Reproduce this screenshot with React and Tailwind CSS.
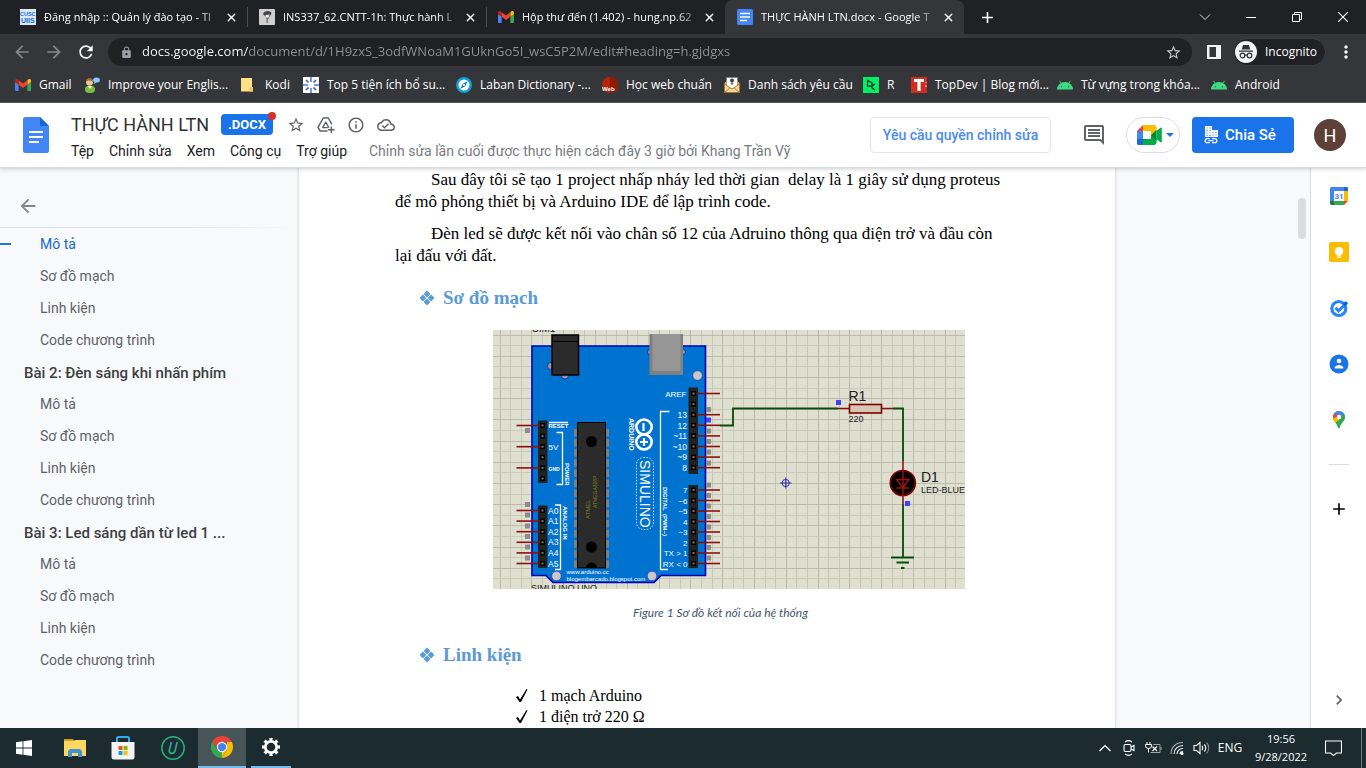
import React from "react";
import {
  MdArrowBack, MdArrowForward, MdRefresh, MdLock, MdStarBorder, MdMoreVert, MdAdd,
  MdOutlineInfo, MdOutlineCloudDone, MdOutlineComment, MdChevronRight,
} from "react-icons/md";
import { X } from "lucide-react";

/* ---------- Favicons and logos ---------- */

const GmailIcon = () => (
  <svg viewBox="0 0 24 18" className="w-4 h-3 shrink-0" aria-hidden="true">
    <path d="M1.6 18H5.5V8.6L0 4.5v11.9C0 17.3.7 18 1.6 18z" fill="#4285f4" />
    <path d="M18.5 18h3.9c.9 0 1.6-.7 1.6-1.6V4.5l-5.5 4.1z" fill="#34a853" />
    <path d="M18.5 1.7v6.9L24 4.5V2.4c0-2-2.3-3.2-3.9-2z" fill="#fbbc04" />
    <path d="M5.5 8.6V1.7L12 6.6l6.5-4.9v6.9L12 13.5z" fill="#ea4335" />
    <path d="M0 2.4v2.1l5.5 4.1V1.7L3.9.4C2.3-.8 0 .4 0 2.4z" fill="#c5221f" />
  </svg>
);

const CuscIcon = () => (
  <svg viewBox="0 0 16 16" className="w-4 h-4 shrink-0" aria-hidden="true">
    <rect width="16" height="16" fill="#dbe8f8" />
    <g fill="#1b6fd0" fontFamily="Liberation Sans, sans-serif" fontWeight="700">
      <text x="0" y="7" fontSize="5.500">CUSC</text>
      <text x="1" y="14" fontSize="7">UIIS</text>
    </g>
  </svg>
);

const BustIcon = () => (
  <svg viewBox="0 0 16 16" className="w-4 h-4 shrink-0" aria-hidden="true">
    <rect width="16" height="16" rx="1" fill="#cfcfcf" />
    <path d="M5.500 6h6L10 9.500 9 10v4H7.500v-4z" fill="#777" />
    <path d="M4 5C5 1.500 11 1 12.500 4L12 6 9 5.500 5 6.500z" fill="#444" />
    <path d="M6.800 6h3v2.500h-3z" fill="#eee" />
  </svg>
);

const DocsFavicon = () => (
  <svg viewBox="0 0 16 16" className="w-4 h-4 shrink-0" aria-hidden="true">
    <rect width="16" height="16" rx="1.500" fill="#4285f4" />
    <path d="M3 4.500h10M3 8h10M3 11.500h7" stroke="#fff" strokeWidth="1.600" />
  </svg>
);

const PersonIcon = () => (
  <svg viewBox="0 0 16 16" className="w-4 h-4 shrink-0" aria-hidden="true">
    <path d="M1 12.500C1 9.500 3 8.500 6 8.500s5 1 5 4c0 2.500-1.500 3.500-5 3.500s-5-1-5-3.500z" fill="#7cc142" />
    <path d="M4 9l2 3 2-3z" fill="#fff" />
    <circle cx="5.500" cy="5" r="3.500" fill="#f0c890" />
    <path d="M2 5C2 0 9 0 9 5 7 3 4 3 2 5z" fill="#9a6a2c" />
    <ellipse cx="12.500" cy="3" rx="3.400" ry="2.600" fill="#8cc4ff" />
    <path d="M10.500 5l-1 2.500 3-2z" fill="#8cc4ff" />
  </svg>
);

const FolderIcon = () => (
  <svg viewBox="0 0 16 16" className="w-4 h-4 shrink-0" aria-hidden="true">
    <path d="M0 1h11v9h1v4.500H0z" fill="#ffe08a" />
    <path d="M8.500 14.500V10.500H12v4z" fill="#f0c455" />
  </svg>
);

const TopFiveIcon = () => (
  <svg viewBox="0 0 16 16" className="w-4 h-4 shrink-0" aria-hidden="true">
    <rect width="16" height="16" fill="#fff" />
    <g stroke="#6b9cf0" strokeWidth="2">
      <path d="M8 0v5M8 11v5M0 8h5M11 8h5" />
      <path d="M3 3l2.500 2.500M13 3l-2.500 2.500M3 13l2.500-2.500M13 13l-2.500-2.500" stroke="#3c5fa8" strokeWidth="1.600" />
    </g>
  </svg>
);

const CompassIcon = () => (
  <svg viewBox="0 0 16 16" className="w-4 h-4 shrink-0" aria-hidden="true">
    <circle cx="8" cy="8" r="8" fill="#0e9fd4" />
    <circle cx="8" cy="8" r="5.500" fill="#fff" />
    <path d="M11.800 4L9.300 9.300 4.200 12 6.800 6.800z" fill="#0b84b8" />
    <circle cx="8" cy="8" r="1" fill="#fff" />
  </svg>
);

const WebIcon = () => (
  <svg viewBox="0 0 16 16" className="w-4 h-4 shrink-0" aria-hidden="true">
    <circle cx="8" cy="8" r="8" fill="#b52408" />
    <path d="M8 0a8 8 0 010 16z" fill="#8e1c05" />
    <text x="0" y="14" fill="#fff" fontFamily="Liberation Sans, sans-serif" fontWeight="700" fontSize="6">Web</text>
  </svg>
);

const MailListIcon = () => (
  <svg viewBox="0 0 16 16" className="w-4 h-4 shrink-0" aria-hidden="true">
    <path d="M.5 6L3 4h10l2.500 2v9.500H.5z" fill="#e9b355" />
    <path d="M2.500 .5h11v9L8 12 2.500 9.500z" fill="#fff" stroke="#777" strokeWidth=".6" />
    <circle cx="8" cy="3.500" r="2" fill="#444" />
    <circle cx="8" cy="6.500" r="1.300" fill="#d14a3a" />
    <path d="M.5 7l7.500 5 7.500-5v8.500H.5z" fill="#f6d79a" stroke="#a06a1c" strokeWidth=".8" />
    <path d="M.5 15.500L6 10.800M15.500 15.500L10 10.800" stroke="#a06a1c" strokeWidth=".8" />
  </svg>
);

const DataIcon = () => (
  <svg viewBox="0 0 16 16" className="w-4 h-4 shrink-0" aria-hidden="true">
    <rect width="16" height="16" fill="#03ef62" />
    <path d="M4.500 9.500V3.500L9 5.800v3L12 7M4.500 9.500L9 8.800M9 8.800V11l3 2" fill="none" stroke="#05192d" strokeWidth="1.100" />
  </svg>
);

const TopDevIcon = () => (
  <svg viewBox="0 0 16 16" className="w-4 h-4 shrink-0" aria-hidden="true">
    <rect width="16" height="16" fill="#d02c20" />
    <path d="M3 2h10v3H9.600v9H6.400V5H3z" fill="#fff" />
    <path d="M15 5v1M15 8v2" stroke="#fff" strokeWidth=".8" />
  </svg>
);

const AndroidIcon = () => (
  <svg viewBox="0 0 16 16" className="w-4 h-4 shrink-0" aria-hidden="true">
    <path d="M0 12.500a8 7.500 0 0116 0z" fill="#3ddc84" />
    <path d="M2.500 3.800l2 3M13.500 3.800l-2 3" stroke="#3ddc84" strokeWidth=".9" />
    <circle cx="4.500" cy="9.800" r=".7" fill="#1f6b42" />
    <circle cx="11.500" cy="9.800" r=".7" fill="#1f6b42" />
  </svg>
);

const ChromeLogo = () => (
  <svg viewBox="0 0 24 24" className="w-[22px] h-[22px]" aria-hidden="true">
    <path d="M12 6.500h10.600L22.400 6A12 12 0 001.600 6L6.800 14z" fill="#ea4335" />
    <path d="M1.600 6l5.200 9 5.200 2.500L12 24A12 12 0 011.600 6z" fill="#34a853" />
    <path d="M12 24l5.200-9 0-8.500h5.500A12 12 0 0112 24z" fill="#fbbc04" />
    <path d="M12 24l5-9-5 2z" fill="#fbbc04" />
    <circle cx="12" cy="12" r="5.600" fill="#fff" />
    <circle cx="12" cy="12" r="4.500" fill="#4285f4" />
  </svg>
);

/* ---------- Browser chrome ---------- */

const tabs = [
  { title: "Đăng nhập :: Quản lý đào tạo - Tl", icon: <CuscIcon /> },
  { title: "INS337_62.CNTT-1h: Thực hành L", icon: <BustIcon /> },
  { title: "Hộp thư đến (1.402) - hung.np.62", icon: <GmailIcon /> },
  { title: "THỰC HÀNH LTN.docx - Google T", icon: <DocsFavicon />, active: true },
];

const bookmarks = [
  { label: "Gmail", icon: <GmailIcon />, width: "w-[69px]" },
  { label: "Improve your Englis...", icon: <PersonIcon />, width: "w-[157px]" },
  { label: "Kodi", icon: <FolderIcon />, width: "w-[62px]" },
  { label: "Top 5 tiện ích bổ su...", icon: <TopFiveIcon />, width: "w-[153px]" },
  { label: "Laban Dictionary -...", icon: <CompassIcon />, width: "w-[146px]" },
  { label: "Học web chuẩn", icon: <WebIcon />, width: "w-[122px]" },
  { label: "Danh sách yêu cầu", icon: <MailListIcon />, width: "w-[139px]" },
  { label: "R", icon: <DataIcon />, width: "w-[48px]" },
  { label: "TopDev | Blog mới...", icon: <TopDevIcon />, width: "w-[146px]" },
  { label: "Từ vựng trong khóa...", icon: <AndroidIcon />, width: "w-[154px]" },
  { label: "Android", icon: <AndroidIcon />, width: "w-[80px]" },
];

function Tab({ title, icon, active }) {
  return (
    <div
      className={
        "flex h-[34px] w-[239px] shrink-0 items-center gap-2 pl-3 pr-2 " +
        (active ? "rounded-t-lg bg-[#35363a]" : "")
      }
    >
      {icon}
      <button
        role="tab"
        aria-selected={!!active}
        className="w-[176px] whitespace-nowrap text-left text-[11px] [mask-image:linear-gradient(90deg,#000_155px,transparent_180px)]"
      >
        {title}
      </button>
      <button aria-label="Đóng thẻ" className="flex h-4 w-4 shrink-0 items-center justify-center">
        <X size={13} strokeWidth={2.500} />
      </button>
    </div>
  );
}

const Separator = () => <div className="-mr-px h-5 w-px shrink-0 bg-[#4a4c50]" />;

function TabStrip() {
  return (
    <div className="flex h-[34px] items-center bg-[#202124] pl-2 text-white">
      <div role="tablist" className="flex items-center">
        <Tab {...tabs[0]} />
        <Separator />
        <Tab {...tabs[1]} />
        <Separator />
        <Tab {...tabs[2]} />
        <Tab {...tabs[3]} />
      </div>
      <button aria-label="Thẻ mới" className="ml-[11px] flex h-6 w-6 items-center justify-center">
        <MdAdd size={19} />
      </button>
      <div className="ml-auto flex h-7 items-center">
        <button aria-label="Tìm thẻ" className="flex w-[46px] justify-center">
          <svg width="12" height="12" viewBox="0 0 12 12"><path d="M1 3.500l5 5 5-5" fill="none" stroke="#ddd" strokeWidth="1" /></svg>
        </button>
        <button aria-label="Thu nhỏ" className="flex w-[46px] justify-center">
          <svg width="10" height="10" viewBox="0 0 10 10"><path d="M0 5.500h10" stroke="#fff" /></svg>
        </button>
        <button aria-label="Khôi phục" className="flex w-[46px] justify-center">
          <svg width="10" height="10" viewBox="0 0 10 10" fill="none" stroke="#fff"><path d="M.5 2.500h7v7h-7zM2.500 2.500v-2h7v7h-2" /></svg>
        </button>
        <button aria-label="Đóng" className="flex w-[46px] justify-center">
          <svg width="10" height="10" viewBox="0 0 10 10"><path d="M0 0l10 10M10 0L0 10" stroke="#fff" strokeWidth="1.100" /></svg>
        </button>
      </div>
    </div>
  );
}

function Toolbar() {
  return (
    <div className="flex h-9 items-center bg-[#35363a] text-white">
      <div className="flex w-[108px] shrink-0 items-center gap-3 pl-3">
        <button aria-label="Quay lại" className="text-[#85878a]"><MdArrowBack size={20} /></button>
        <button aria-label="Tiến" className="text-[#85878a]"><MdArrowForward size={20} /></button>
        <button aria-label="Tải lại"><MdRefresh size={20} /></button>
      </div>
      <div className="flex h-7 min-w-0 flex-1 items-center rounded-full bg-[#202124] pl-3 pr-[10px]">
        <MdLock size={13} className="mr-[9px] shrink-0 text-[#9aa0a6]" />
        <input
          aria-label="Thanh địa chỉ"
          defaultValue="docs.google.com/document/d/1H9zxS_3odfWNoaM1GUknGo5I_wsC5P2M/edit#heading=h.gjdgxs"
          className="min-w-0 flex-1 bg-[linear-gradient(90deg,#fff_106px,#8f9398_106px)] bg-clip-text text-[13px] text-transparent outline-none"
        />
        <button aria-label="Đánh dấu trang" className="text-[#c4c7c5]"><MdStarBorder size={17} /></button>
      </div>
      <button aria-label="Bảng điều khiển bên" className="ml-[15px]">
        <svg width="14" height="14" viewBox="0 0 14 14"><path d="M0 0h14v14H0zM2.500 2v10H9V2z" fill="#f1f3f4" fillRule="evenodd" /></svg>
      </button>
      <button className="ml-3 flex h-7 w-[93px] items-center gap-2 rounded-full border border-[#3d3e42] bg-[#202124] pl-px text-xs">
        <svg width="22" height="22" viewBox="0 0 22 22" aria-hidden="true">
          <circle cx="11" cy="11" r="11" fill="#f1f3f4" />
          <path d="M8 4h6l1.200 4.500H6.800zM4 9.500h14v1.300H4z" fill="#303134" />
          <g fill="none" stroke="#303134" strokeWidth="1.200"><circle cx="7.500" cy="14.500" r="2.300" /><circle cx="14.500" cy="14.500" r="2.300" /><path d="M9.800 14.200h2.400" /></g>
        </svg>
        Incognito
      </button>
      <button aria-label="Menu" className="mx-2 flex w-6 justify-center"><MdMoreVert size={20} /></button>
    </div>
  );
}

function Bookmarks() {
  return (
    <nav className="flex h-8 items-center bg-[#35363a] pb-[2px] pl-[15px] text-white">
      {bookmarks.map((b) => (
        <a key={b.label} href="#" className={"flex shrink-0 items-center gap-2 whitespace-nowrap " + b.width}>
          {b.icon}
          {b.label}
        </a>
      ))}
    </nav>
  );
}

/* ---------- Document header ---------- */

const DriveAddIcon = () => (
  <svg width="18" height="18" viewBox="0 0 18 18" fill="none" stroke="#5f6368" strokeWidth="1.500" strokeLinejoin="round">
    <path d="M10.500 15H3.200L1 11.300 6.200 2h5.100l3.600 6.300" />
    <path d="M10.800 11.600H5.700L8.800 6l3.100 5.600" strokeWidth="1.400" />
    <path d="M14.300 10.500v6.500M11 13.800h6.600" />
  </svg>
);

const MeetIcon = () => (
  <svg width="25" height="20" viewBox="0 0 25 20" aria-hidden="true">
    <path d="M6 0v6H0z" fill="#ea4335" />
    <path d="M0 6h6v8H0z" fill="#4285f4" />
    <path d="M0 14h6v6H1.800C.8 20 0 19.200 0 18.200z" fill="#1967d2" />
    <path d="M6 0h11c1.500 0 2.500 1 2.500 2.500V7L14 12V6H6z" fill="#fbbc04" />
    <path d="M6 14h8v-4l5.500 3v4.500c0 1.500-1 2.500-2.500 2.500H6z" fill="#00ac47" />
    <path d="M14 10l5.500-5v11z" fill="#00832d" />
    <path d="M19.500 6l4-3.300c.6-.5 1.300 0 1.300.7v13.200c0 .7-.7 1.200-1.300.7l-4-3.300z" fill="#00ac47" />
  </svg>
);

const DomainIcon = () => (
  <svg width="14" height="18" viewBox="0 0 14 18" aria-hidden="true">
    <path d="M1 0h7v4h6v7H1z" fill="#fff" />
    <path d="M2.500 2h1M5.500 2h1M2.500 4.500h1M5.500 4.500h1M2.500 7h1M5.500 7h1M2.500 9.300h1M5.500 9.300h1M8.500 6.500h1M11.500 6.500h1M8.500 9h1M11.500 9h1" stroke="#1a73e8" strokeWidth="1.200" />
    <path d="M6 12.700H3.200a2 2 0 000 4H6M8 12.700h2.800a2 2 0 010 4H8M4.500 14.700h5" fill="none" stroke="#fff" strokeWidth="1.200" />
  </svg>
);

function DocHeader() {
  return (
    <header className="z-10 flex h-[65px] shrink-0 items-center border-b border-[#d8dade] bg-white pr-5 shadow-[0_1px_4px_rgba(60,64,67,0.25)] [font-family:Roboto,sans-serif]">
      <a href="#" aria-label="Tài liệu" className="ml-[23px] shrink-0">
        <svg width="26" height="36" viewBox="0 0 26 36">
          <path d="M2.500 0H17l9 9v24.500a2.500 2.500 0 01-2.500 2.500h-21A2.500 2.500 0 010 33.500v-31A2.500 2.500 0 012.500 0z" fill="#4285f4" />
          <path d="M17 0l9 9h-9z" fill="#1967d2" />
          <path d="M6 15h14M6 20h14M6 25h10" stroke="#fff" strokeWidth="2" />
        </svg>
      </a>
      <div className="ml-[22px] flex min-w-0 flex-col pt-[3px]">
        <div className="flex h-[29px] items-center">
          <h1 className="whitespace-nowrap text-[18px] text-[#2f3236]">THỰC HÀNH LTN</h1>
          <div className="relative ml-3 flex h-[21px] w-[52px] items-center justify-center rounded bg-[#1a73e8] text-[13px] font-bold text-white">
            .DOCX
            <span className="absolute -right-[3px] -top-[2px] h-2 w-2 rounded-full bg-[#d93025]" />
          </div>
          <div className="ml-[14px] flex items-center gap-3 text-[#5f6368]">
            <button aria-label="Gắn dấu sao"><MdStarBorder size={18} /></button>
            <button aria-label="Thêm vào Drive"><DriveAddIcon /></button>
            <button aria-label="Thông tin"><MdOutlineInfo size={18} /></button>
            <button aria-label="Trạng thái lưu"><MdOutlineCloudDone size={18} /></button>
          </div>
        </div>
        <div className="flex h-6 items-center whitespace-nowrap text-[14px] text-[#202124]">
          <button className="mr-[15px]">Tệp</button>
          <button className="mr-[15px]">Chỉnh sửa</button>
          <button className="mr-[15px]">Xem</button>
          <button className="mr-[15px]">Công cụ</button>
          <button className="mr-[22px]">Trợ giúp</button>
          <a href="#" className="text-[#777b80]">Chỉnh sửa lần cuối được thực hiện cách đây 3 giờ bởi Khang Trần Vỹ</a>
        </div>
      </div>
      <div className="ml-auto flex shrink-0 items-center">
        <button className="h-9 w-[181px] whitespace-nowrap rounded border border-[#e4e6ea] text-[14px] font-medium text-[#4a8af4]">
          Yêu cầu quyền chỉnh sửa
        </button>
        <button aria-label="Nhận xét" className="ml-[31px] text-[#5f6368]"><MdOutlineComment size={24} /></button>
        <button aria-label="Cuộc gọi" className="ml-5 flex h-9 w-[54px] items-center rounded-full border border-[#dadce0] pl-[10px]">
          <MeetIcon />
          <svg width="8" height="4" viewBox="0 0 8 4" className="ml-1"><path d="M0 0h8L4 4z" fill="#1a73e8" /></svg>
        </button>
        <button className="ml-3 flex h-9 w-[102px] items-center gap-[7px] rounded bg-[#1a73e8] pl-3 text-[15px] font-medium text-white">
          <DomainIcon />
          Chia Sẻ
        </button>
        <button aria-label="Tài khoản" className="ml-5 h-8 w-8 rounded-full bg-[#5d4037] text-[18px] text-white">H</button>
      </div>
    </header>
  );
}

/* ---------- Outline ---------- */

const outline = [
  { text: "Mô tả", active: true }, { text: "Sơ đồ mạch" }, { text: "Linh kiện" }, { text: "Code chương trình" },
  { text: "Bài 2: Đèn sáng khi nhấn phím", section: true },
  { text: "Mô tả" }, { text: "Sơ đồ mạch" }, { text: "Linh kiện" }, { text: "Code chương trình" },
  { text: "Bài 3: Led sáng dần từ led 1 ...", section: true },
  { text: "Mô tả" }, { text: "Sơ đồ mạch" }, { text: "Linh kiện" }, { text: "Code chương trình" },
];

function Outline() {
  return (
    <aside className="w-[298px] shrink-0 [font-family:Roboto,sans-serif]">
      <div className="flex h-[60px] items-center bg-[linear-gradient(90deg,#dfe1e5_60%,transparent)] bg-[length:100%_1px] bg-bottom bg-no-repeat pl-[17px] pt-4">
        <button aria-label="Đóng bố cục" className="text-[#80868b]"><MdArrowBack size={22} /></button>
      </div>
      <nav>
        {outline.map((o, i) => (
          <a
            key={i}
            href="#"
            className={
              "flex h-8 items-center whitespace-nowrap " +
              (o.section
                ? "pl-6 pt-[2px] text-[15px] font-medium text-[#3c4043]"
                : o.active
                  ? "text-[14px] text-[#1967d2]"
                  : "pl-10 text-[14px] text-[#5f6368]")
            }
          >
            {o.active && <span className="mr-[29px] h-[2px] w-[11px] bg-[#1a73e8]" />}
            {o.text}
          </a>
        ))}
      </nav>
    </aside>
  );
}

/* ---------- Circuit drawing ---------- */

const range = (n) => Array.from({ length: n }, (_, i) => i);
const P = 10.6;
const leftTop = range(6).map((i) => 425.5 + i * P);
const leftLow = range(6).map((i) => 510.5 + i * P);
const rightTop = range(8).map((i) => 393.5 + i * P);
const rightLow = range(8).map((i) => 490 + i * 10.5);

function Circuit() {
  return (
    <svg viewBox="493 330 472 259" className="h-[259px] w-[472px]" role="img" aria-label="Sơ đồ kết nối Arduino" fontFamily="Liberation Sans, Arial, sans-serif">
      <rect x="493" y="330" width="472" height="259" fill="#dfdfd0" />
      {range(45).map((i) => {
        const x = Math.round(499.5 + i * P);
        return <path key={i} d={`M${x}.5 330V589`} stroke={i % 3 === 0 ? "#b9b9aa" : "#c8c8b9"} />;
      })}
      {range(25).map((i) => {
        const y = Math.round(334.5 + i * P);
        return <path key={i} d={`M493 ${y}.5H965`} stroke={i % 2 === 0 ? "#bbbbac" : "#cacabb"} />;
      })}

      <text x="532" y="331.500" fontSize="10" fill="#222">SIM1</text>
      <text x="531" y="591" fontSize="9" fill="#222">SIMULINO UNO</text>

      <path d="M532 346H705.500V575.500H661L654 582.500H553L546 575.500H532z" fill="#0072d0" stroke="#0000b8" strokeWidth="1.600" />

      <g fill="#999" stroke="#0000b8" strokeWidth=".6">
        <circle cx="551" cy="366" r="3.500" /><circle cx="565" cy="375.500" r="3.500" />
        <circle cx="650" cy="352" r="2.500" /><circle cx="683" cy="352" r="2.500" />
      </g>
      <rect x="552" y="335" width="26.500" height="40" fill="#2b2b2b" stroke="#000" strokeWidth="1.500" />
      <path d="M552 341.500h27" stroke="#000" />
      <rect x="649.500" y="334" width="33.500" height="41" fill="#808080" />
      <path d="M652.500 334h28v37h-28z" fill="#969696" />
      <g fill="#c8c8c8" stroke="#2222b0" strokeWidth=".6">
        <circle cx="697.500" cy="375.500" r="4.800" /><circle cx="556.500" cy="576" r="4.800" /><circle cx="652" cy="576" r="4.800" />
      </g>

      <g fill="#222">
        <rect x="538" y="420.500" width="9.500" height="62.500" /><rect x="538" y="505.500" width="9.500" height="62.500" />
        <rect x="688.500" y="387.500" width="9.500" height="86.500" /><rect x="688.500" y="485" width="9.500" height="83" />
      </g>
      {[...leftTop, ...leftLow].map((y) => (
        <g key={y}><rect x="540" y={y - 2.5} width="5" height="5" fill="#000" /><rect x="541.500" y={y - 1} width="2" height="2" fill="#777" /></g>
      ))}
      {[...rightTop, ...rightLow].map((y) => (
        <g key={y}><rect x="691" y={y - 2.5} width="5" height="5" fill="#000" /><rect x="692.500" y={y - 1} width="2" height="2" fill="#777" /></g>
      ))}
      <g stroke="#8a1010" strokeWidth="1.600">
        {[leftTop[0], leftTop[2], leftTop[4], ...leftLow].map((y) => <path key={y} d={`M516.500 ${y}H540`} />)}
        {[rightTop[0], ...rightTop.slice(2), ...rightLow].map((y) => <path key={y} d={`M697 ${y}H720`} />)}
      </g>
      <g fill="#8c8c84">
        {[430.5, 504.5, 515, 526, 536.5, 547, 558].map((y) => <rect key={y} x="525" y={y - 2.5} width="5" height="5" />)}
        {[409.5, 431, 441.5, 452, 463, 485, 495.5, 506, 516.5, 527, 537.5, 547.5, 558].map((y) => <rect key={y} x="706" y={y - 2.5} width="5" height="5" />)}
      </g>
      <rect x="706" y="417.500" width="5" height="5" fill="#4040ff" />

      <g fill="#808080">
        {range(14).map((i) => (
          <g key={i}><rect x="574" y={429 + i * 10.1} width="3.500" height="7.500" /><rect x="605.500" y={429 + i * 10.1} width="3.500" height="7.500" /></g>
        ))}
      </g>
      <rect x="577.500" y="422.500" width="28" height="145.500" fill="#2b2b2b" stroke="#000" />
      <circle cx="591.500" cy="441.500" r="5.500" fill="#000" />
      <circle cx="591.500" cy="547" r="5.500" fill="#000" />
      <path d="M586 568a5.500 5.500 0 0111 0z" fill="#000" />
      <g fill="#85801c">
        <text transform="translate(590 519) rotate(-90)" fontSize="6">ATMEL</text>
        <text transform="translate(597 508) rotate(-90)" fontSize="5">ATMEGA328P</text>
      </g>

      <g fill="none" stroke="#fff" strokeWidth="1.300">
        <path d="M556.500 432.500h6v52h-6M555 505h5.500v64.500H555M669.500 411.500h-9V569.500h7.500M549 422.500h19" />
        <g strokeWidth="2.600"><ellipse cx="644" cy="427" rx="7.700" ry="7.500" /><ellipse cx="644" cy="442" rx="7.700" ry="7.500" /></g>
        <path d="M643.500 423v8M640 442h8M644 438v8" strokeWidth="2.200" />
        <rect x="636.500" y="457.500" width="17" height="72" rx="7" strokeWidth=".8" strokeDasharray="1.500 1.500" />
      </g>
      <g fill="#fff" fontSize="8.500">
        <text x="686.500" y="396.500" textAnchor="end" fontSize="8">AREF</text>
        {["13", "12", "~11", "~10", "~9", "8"].map((t, i) => <text key={t} x="687" y={418 + i * P} textAnchor="end">{t}</text>)}
        {["7", "~6", "~5", "4", "~3", "2", "TX > 1", "RX < 0"].map((t, i) => <text key={t} x="687.500" y={493 + i * 10.5} textAnchor="end" fontSize="8">{t}</text>)}
        {["A0", "A1", "A2", "A3", "A4", "A5"].map((t, i) => <text key={t} x="548" y={513.5 + i * P}>{t}</text>)}
        <text x="548.500" y="449.500" fontSize="8">5V</text>
      </g>
      <g fill="#fff" fontWeight="700">
        <text x="548.500" y="428" fontSize="6">RESET</text>
        <text x="548.500" y="471" fontSize="5">GND</text>
        <text transform="translate(565 463) rotate(90)" fontSize="6">POWER</text>
        <text transform="translate(563 506) rotate(90)" fontSize="6">ANALOG IN</text>
        <text transform="translate(662.500 487) rotate(90)" fontSize="6">DIGITAL&#160; (PWM~)</text>
        <text transform="translate(628.500 418) rotate(90)" fontSize="7">ARDUINO</text>
      </g>
      <g fill="#fff" fontSize="6">
        <text x="566.500" y="574">www.arduino.cc</text>
        <text x="566.500" y="580.500">blogembarcado.blogspot.com</text>
      </g>
      <text transform="translate(640 460) rotate(90)" fill="#fff" fontSize="14">SIMULINO</text>

      <g fill="none" stroke="#0a4a0a" strokeWidth="1.800">
        <path d="M720 425.500H733V408.500H838M893 408.500H903V461M903 504V557M891 557.500H914" />
        <path d="M896.500 562.500H909M901 568H904.500" />
      </g>
      <path d="M838 408.500H849M882 408.500H893M903 461V470M903 496V504" stroke="#8a1010" strokeWidth="1.500" />
      <rect x="849.500" y="404.500" width="32" height="8.500" fill="#d4c8b4" stroke="#800000" strokeWidth="1.600" />
      <circle cx="902.800" cy="483" r="12.500" fill="#000" stroke="#800000" strokeWidth="1.700" />
      <path d="M903 470V496M896.500 479.500H909L903 487.500zM896.500 488H909" fill="none" stroke="#a01010" strokeWidth="1.400" />
      <g fill="#4040ff"><rect x="836" y="400" width="5" height="5" /><rect x="905" y="501" width="5" height="5" /></g>
      <g fill="none" stroke="#2020b0" strokeWidth=".9"><circle cx="785.700" cy="483" r="3.600" /><path d="M780 483H791.500M785.700 477.500V488.500" /></g>
      <g fill="#222">
        <text x="848.500" y="401" fontSize="14">R1</text><text x="848.500" y="421.500" fontSize="9">220</text>
        <text x="921" y="482" fontSize="14">D1</text><text x="921" y="493" fontSize="9">LED-BLUE</text>
      </g>
    </svg>
  );
}

/* ---------- Document page ---------- */

const Heading = ({ children }) => (
  <h2 className="flex items-center pl-6 text-[19px] font-bold leading-6 text-[#5b9bd5]">
    <svg width="16" height="16" viewBox="0 0 16 16" className="mr-2" aria-hidden="true">
      <path d="M8 .5l3.400 3.400L8 7.400 4.600 3.900zM8 8.600l3.400 3.500L8 15.500l-3.400-3.400zM3.900 4.600L7.400 8l-3.500 3.400L.5 8zM12.100 4.600L15.500 8l-3.400 3.400L8.600 8z" fill="#5b9bd5" />
    </svg>
    {children}
  </h2>
);

const Check = () => (
  <svg width="12" height="14" viewBox="0 0 12 14" className="mr-[11px]" aria-hidden="true">
    <path d="M0 8l2-1 2 3.500L10.500 0l1 .5L5 13H3.500z" fill="#000" />
  </svg>
);

function Page() {
  return (
    <main className="ml-px w-[816px] shrink-0 overflow-hidden bg-white px-24 pt-px text-black shadow-[0_0_2px_1px_rgba(60,64,67,0.15)] [font-family:'Liberation_Serif',serif]">
      <div className="whitespace-nowrap text-[17px] leading-[22px]">
        <p className="indent-9">
          Sau đây tôi sẽ tạo 1 project nhấp nháy led thời gian&#160; delay là 1 giây sử dụng proteus<br />
          để mô phỏng thiết bị và Arduino IDE để lập trình code.
        </p>
        <p className="mt-[10px] indent-9">
          Đèn led sẽ được kết nối vào chân số 12 của Adruino thông qua điện trở và đầu còn<br />
          lại đấu với đất.
        </p>
      </div>
      <div className="mt-[19px]"><Heading>Sơ đồ mạch</Heading></div>
      <figure className="mt-5 flex flex-col">
        <div className="ml-[98px] w-[472px]"><Circuit /></div>
        <figcaption className="mt-3 pl-[27px] text-center text-[12px] italic leading-6 text-[#44546a] [font-family:Lato,sans-serif]">
          Figure 1 Sơ đồ kết nối của hệ thống
        </figcaption>
      </figure>
      <div className="mt-[18px]"><Heading>Linh kiện</Heading></div>
      <ul className="mt-[18px] pl-[121px] text-[16px] leading-[21px]">
        <li className="flex items-center"><Check />1 mạch Arduino</li>
        <li className="flex items-center"><Check />1 điện trở 220 Ω</li>
      </ul>
    </main>
  );
}

/* ---------- Side panel ---------- */

function SidePanel() {
  return (
    <aside className="flex w-14 shrink-0 flex-col items-center border-l border-[#d8dade] bg-white pt-[18px]">
      <div className="flex flex-col items-center gap-9">
        <button aria-label="Lịch">
          <svg width="20" height="20" viewBox="0 0 20 20">
            <path d="M1 2.500C1 1.700 1.700 1 2.500 1H15v4H5v10H1z" fill="#4285f4" />
            <path d="M15 1h2.500c.8 0 1.500.7 1.500 1.500V5h-4z" fill="#1967d2" />
            <path d="M15 5h4v10h-4z" fill="#fbbc04" />
            <path d="M5 15h10v4H5z" fill="#34a853" />
            <path d="M1 15h4v4H2.500C1.700 19 1 18.300 1 17.500z" fill="#188038" />
            <path d="M15 15h4l-4 4z" fill="#ea4335" />
            <path d="M5 5h10v10H5z" fill="#fff" />
            <text x="5.500" y="13" fontSize="8" fontWeight="700" fill="#4285f4" fontFamily="Roboto, sans-serif">31</text>
          </svg>
        </button>
        <button aria-label="Keep">
          <svg width="20" height="20" viewBox="0 0 20 20">
            <rect width="20" height="20" rx="1.500" fill="#fbbc04" />
            <path d="M10 5a4.200 4.200 0 00-2.200 7.800v.9h4.400v-.9A4.200 4.200 0 0010 5zM7.800 14.500h4.400v1.300H7.800z" fill="#fff" />
          </svg>
        </button>
        <button aria-label="Việc cần làm">
          <svg width="20" height="20" viewBox="0 0 20 20" fill="none">
            <circle cx="9.800" cy="10.500" r="7" stroke="#2684fc" strokeWidth="3.200" />
            <path d="M6.500 9.800l3 3L17.500 5" stroke="#2684fc" strokeWidth="3" />
            <path d="M13.800 6l3-3 2.200 2.200-3.200 3.200z" fill="#0066da" />
          </svg>
        </button>
        <button aria-label="Danh bạ">
          <svg width="20" height="20" viewBox="0 0 20 20">
            <circle cx="10" cy="10" r="9.500" fill="#1a73e8" />
            <circle cx="10" cy="7" r="2.300" fill="#fff" />
            <path d="M5.500 14.500c0-4.700 9-4.700 9 0z" fill="#fff" />
          </svg>
        </button>
        <button aria-label="Maps">
          <svg width="20" height="20" viewBox="0 0 20 20">
            <defs><clipPath id="pin"><path d="M10 1a6 6 0 00-6 6c0 4 4 6 5.200 10.700.2 1 1.400 1 1.600 0C12 13 16 11 16 7a6 6 0 00-6-6z" /></clipPath></defs>
            <g clipPath="url(#pin)">
              <path d="M0 0h20v20H0z" fill="#34a853" />
              <path d="M0 0h20L10 7 4 14H0z" fill="#fbbc04" />
              <path d="M0 0h8l2 7-5 4H0z" fill="#ea4335" />
              <path d="M5 3L9 0h8l-1 4-6 3z" fill="#4285f4" />
              <path d="M16 3.500v5L8 19 4 13z" fill="#34a853" />
              <path d="M4 8l4-1 2.500 2.500L6 13z" fill="#fbbc04" />
            </g>
            <circle cx="10" cy="7" r="2.200" fill="#fff" />
          </svg>
        </button>
      </div>
      <div className="mt-[34px] h-px w-5 bg-[#dadce0]" />
      <button aria-label="Tải tiện ích bổ sung" className="mt-[34px] text-black"><MdAdd size={20} /></button>
      <button aria-label="Ẩn bảng" className="mb-[18px] mt-auto text-[#5f6368]"><MdChevronRight size={20} /></button>
    </aside>
  );
}

/* ---------- Windows taskbar ---------- */

const Gear = () => (
  <svg width="20" height="20" viewBox="0 0 20 20" aria-hidden="true">
    <circle cx="10" cy="10" r="5.700" fill="none" stroke="#fff" strokeWidth="2.800" />
    <g fill="#fff">
      {range(8).map((i) => <path key={i} d="M8.200 1h3.600l-.6 3H8.800z" transform={`rotate(${i * 45} 10 10)`} />)}
    </g>
  </svg>
);

function Taskbar() {
  return (
    <footer className="flex h-10 shrink-0 items-center bg-[#1b2b30] text-white">
      <button aria-label="Bắt đầu" className="flex w-12 justify-center">
        <svg width="16" height="16" viewBox="0 0 16 16" fill="#fff"><path d="M0 2.200L6.600 1.300v6.300H0zM7.400 1.200L16 0v7.600H7.400zM0 8.400h6.600v6.300L0 13.800zM7.400 8.400H16V16l-8.600-1.200z" /></svg>
      </button>
      <button aria-label="Thư mục" className="ml-[3px] flex w-12 justify-center">
        <svg width="22" height="18" viewBox="0 0 22 18">
          <path d="M0 0h9l1.500 2H0z" fill="#d99a1c" /><path d="M0 2h10l1-1h11v16H0z" fill="#ffd75e" />
          <path d="M4 18v-6l2-2h10l2 2v6h-4v-4H8v4z" fill="#3f93d8" />
        </svg>
      </button>
      <button aria-label="Cửa hàng" className="flex w-12 justify-center">
        <svg width="24" height="24" viewBox="0 0 24 24">
          <path d="M6 6V2.500C6 1.700 6.700 1 7.500 1h9c.8 0 1.500.7 1.500 1.500V6" fill="none" stroke="#2bb0ee" strokeWidth="2" />
          <path d="M.5 6h23v15a2.500 2.500 0 01-2.500 2.500H3A2.500 2.500 0 01.5 21z" fill="#f4f4f4" />
          <path d="M7.500 10h4v4h-4z" fill="#f25022" /><path d="M12.500 10h4v4h-4z" fill="#7fba00" />
          <path d="M7.500 15h4v4h-4z" fill="#00a4ef" /><path d="M12.500 15h4v4h-4z" fill="#ffb900" />
        </svg>
      </button>
      <button aria-label="Uninstaller" className="ml-[2px] flex w-12 justify-center">
        <svg width="24" height="24" viewBox="0 0 24 24" fill="none" stroke="#22b573">
          <circle cx="12" cy="12" r="11.200" fill="#1f2a3a" strokeWidth="1.500" />
          <path d="M10.300 6L8.300 14.500c-.6 3.800 5 3.800 5.800 0L16.200 6" strokeWidth="1.700" />
        </svg>
      </button>
      <button aria-label="Chrome" className="ml-px flex h-10 w-12 items-center justify-center border-b-2 border-[#76b9ed] bg-[#475558]"><ChromeLogo /></button>
      <button aria-label="Cài đặt" className="ml-[5px] flex h-10 w-10 items-center justify-center border-b-2 border-[#76b9ed]"><Gear /></button>
      <div className="ml-auto flex items-center">
        <button aria-label="Biểu tượng ẩn" className="flex w-6 justify-center">
          <svg width="12" height="8" viewBox="0 0 12 8"><path d="M.5 7L6 1.500 11.500 7" fill="none" stroke="#fff" strokeWidth="1.200" /></svg>
        </button>
        <button aria-label="Họp ngay" className="flex w-6 justify-center">
          <svg width="14" height="16" viewBox="0 0 14 16" fill="none" stroke="#fff" strokeWidth="1.100"><rect x="2" y="4.500" width="7" height="7" rx="1.500" /><path d="M9 7l3-1.500v5L9 9M3 2c2-1.500 5-1.500 7 0M3 14c2 1.500 5 1.500 7 0" /></svg>
        </button>
        <button aria-label="Pin" className="flex w-6 justify-center">
          <svg width="17" height="14" viewBox="0 0 17 14" fill="none" stroke="#fff">
            <path d="M2 1v2.500M5 1v2.500M.5 3.500h6v1.500a3 2.500 0 01-6 0zM3.500 7.500v4" />
            <path d="M8 3.500h7v8H5.500M16 6v3" stroke="#9aa3a5" />
            <path d="M7.500 5.500l4.500 4.500M12 5.500L7.500 10" strokeWidth="1.200" />
          </svg>
        </button>
        <button aria-label="Mạng" className="flex w-6 justify-center">
          <svg width="14" height="14" viewBox="0 0 14 14" fill="none" stroke="#fff" strokeWidth="1.100"><path d="M1 13C1 6 6 1.500 13 1.500" stroke="#aab2b4" /><path d="M4 13c0-5 4-8.500 9-8.500M7 13c0-3 2.500-5.500 6-5.500M10 13c0-1.500 1-2.500 3-2.500" /><circle cx="12" cy="12.500" r="1" fill="#fff" /></svg>
        </button>
        <button aria-label="Âm lượng" className="flex w-6 justify-center">
          <svg width="17" height="14" viewBox="0 0 17 14" fill="none" stroke="#fff" strokeWidth="1.100"><path d="M1 4.500h2.500L7 1.500v11L3.500 9.500H1zM9 5c1 1 1 3 0 4M11.300 3.500c2 2 2 5 0 7" /><path d="M13.500 1.500c3 3 3 8 0 11" stroke="#7f898c" /></svg>
        </button>
        <button className="flex w-[34px] justify-center text-xs">ENG</button>
        <button className="mr-3 flex w-[68px] flex-col items-center whitespace-nowrap text-[11px] leading-[18px]">
          <span>19:56</span>
          <span>9/28/2022</span>
        </button>
        <button aria-label="Thông báo" className="mr-1 flex w-3 justify-center">
          <svg width="17" height="16" viewBox="0 0 17 16" className="shrink-0" fill="none" stroke="#fff" strokeWidth="1.100"><path d="M.5 1h16v12h-5L8.500 15.500 5.500 13h-5z" /></svg>
        </button>
        <div className="ml-[18px] mr-1 h-10 w-px bg-[#6d777a]" />
      </div>
    </footer>
  );
}

export default function App() {
  return (
    <div className="flex h-screen flex-col overflow-hidden bg-[#f8f9fa]">
      <div className="shrink-0 border-b border-[#5a5b5f] text-xs [font-family:'Open_Sans',sans-serif]">
        <TabStrip />
        <Toolbar />
        <Bookmarks />
      </div>
      <DocHeader />
      <div className="flex min-h-0 flex-1">
        <Outline />
        <Page />
        <div className="flex flex-1 justify-end pr-1 pt-[30px]">
          <div className="h-[41px] w-2 rounded-full bg-[#dadce0]" />
        </div>
        <SidePanel />
      </div>
      <div className="[font-family:'Open_Sans',sans-serif]"><Taskbar /></div>
    </div>
  );
}
